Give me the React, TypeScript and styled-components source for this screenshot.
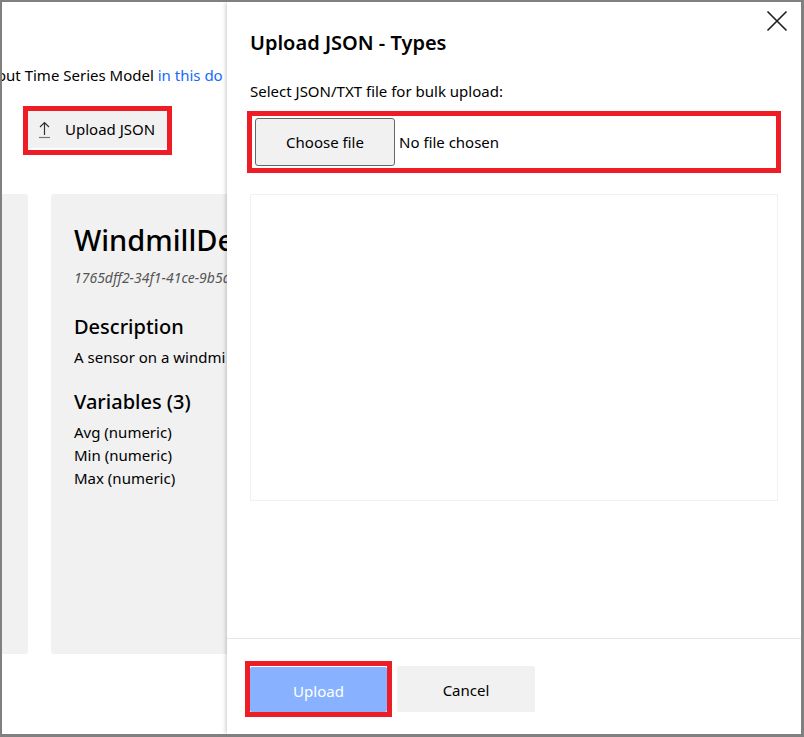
import React, { useState } from "react";
import styled, { createGlobalStyle, css } from "styled-components";

const GlobalStyle = createGlobalStyle`
  *, *::before, *::after { box-sizing: border-box; }
  body {
    margin: 0;
    background: #fff;
    color: #000;
    font: 400 15px/23px "Segoe UI", "Noto Sans", "Open Sans", sans-serif;
  }
  h1, h2, h3, p, ul { margin: 0; padding: 0; }
  button { font: inherit; color: inherit; cursor: pointer; }
`;

const Frame = styled.div`
  display: grid;
  grid-template-columns: 225px minmax(0, 1fr);
  min-height: 100vh;
  border: solid #808080;
  border-width: 2px 3px 3px 2px;
`;

const Page = styled.main`
  min-width: 0;
  overflow: hidden;
  padding-top: 62px;
  white-space: nowrap;
`;

const Intro = styled.p`
  margin-left: -5px;
`;

const DocLink = styled.a`
  color: #136bfb;
  text-decoration: none;
`;

const highlight = css`
  border: 5px solid #ee1c25;
`;

const Toolbar = styled.div`
  display: flex;
  margin: 19px 0 39px 21px;
`;

const ToolbarHighlight = styled.div`
  ${highlight}
  padding-bottom: 2px;
`;

const ToolbarButton = styled.button`
  display: flex;
  align-items: center;
  gap: 14px;
  height: 37px;
  padding: 0 12px 0 10px;
  border: 0;
  background: #f1f1f1;
`;

const Cards = styled.div`
  display: grid;
  grid-template-columns: 26px 320px;
  gap: 23px;
`;

const Card = styled.article<{ $cut?: boolean }>`
  min-height: 460px;
  padding: ${(p) => (p.$cut ? "0" : "29px 23px")};
  border-radius: ${(p) => (p.$cut ? "0 3px 3px 0" : "3px")};
  background: #f1f1f1;
`;

const CardTitle = styled.h1`
  font-size: 29px;
  line-height: 34px;
  font-weight: 500;
`;

const CardId = styled.p`
  margin: 9px 0 25px;
  color: #555;
  font-size: 14px;
  font-style: italic;
`;

const SectionTitle = styled.h2`
  margin-bottom: 6px;
  font-size: 20px;
  line-height: 26px;
  font-weight: 500;
`;

const Description = styled.p`
  margin-bottom: 20px;
`;

const VariableList = styled.ul`
  list-style: none;
`;

const Panel = styled.section`
  z-index: 1;
  display: flex;
  flex-direction: column;
  min-width: 0;
  background: #fff;
  box-shadow: 0 0 5px rgba(0, 0, 0, 0.3);
  clip-path: inset(0 0 0 -8px);
`;

const PanelHeader = styled.header`
  display: flex;
  justify-content: space-between;
  align-items: flex-start;
  padding: 8px 13px 0 23px;
`;

const PanelTitle = styled.h2`
  padding-top: 20px;
  font-size: 20px;
  line-height: 26px;
  font-weight: 600;
`;

const CloseButton = styled.button`
  display: flex;
  padding: 0;
  border: 0;
  background: none;
`;

const PanelBody = styled.div`
  flex: 1;
  padding: 24px 20px;
`;

const Prompt = styled.p`
  margin: 0 3px 8px;
`;

const FilePicker = styled.label`
  ${highlight}
  position: relative;
  display: flex;
  align-items: center;
  gap: 4px;
  height: 62px;
  padding: 0 3px;
  cursor: pointer;
`;

const FileInput = styled.input`
  position: absolute;
  inset: 0;
  width: 100%;
  opacity: 0;
  cursor: pointer;
`;

const FileButton = styled.span`
  display: grid;
  place-items: center;
  width: 140px;
  height: 48px;
  border: 1px solid #666;
  border-radius: 3px;
  background: #f1f1f1;
`;

const Preview = styled.div`
  height: 307px;
  margin: 21px 3px 0;
  border: 1px solid #f1f1f1;
`;

const PanelFooter = styled.footer`
  display: flex;
  align-items: center;
  gap: 5px;
  height: 96px;
  padding: 4px 18px 0;
  border-top: 1px solid #e6e6e6;
`;

const UploadHighlight = styled.div`
  ${highlight}
  padding-top: 1px;
`;

const ActionButton = styled.button<{ $primary?: boolean }>`
  display: block;
  width: ${(p) => (p.$primary ? 137 : 138)}px;
  height: ${(p) => (p.$primary ? 45 : 46)}px;
  padding: 4px 0 0;
  border: 0;
  border-radius: 2px;
  background: ${(p) => (p.$primary ? "#88b2ff" : "#f1f1f1")};
  color: ${(p) => (p.$primary ? "#fff" : "#000")};
`;

const UploadIcon = () => (
  <svg width="13" height="18" viewBox="0 0 13 18" fill="none" aria-hidden="true">
    <path d="M6.500 14V1.500M2 6l4.500-4.500L11 6" stroke="#333" strokeWidth="1.2" />
    <path d="M1 16.500h11" stroke="#777" strokeWidth="1.2" />
  </svg>
);

const CloseIcon = () => (
  <svg width="22" height="22" viewBox="0 0 22 22" fill="none" aria-hidden="true">
    <path d="M1.500 1.500l19 19M20.500 1.500l-19 19" stroke="#222" strokeWidth="1.7" />
  </svg>
);

const variables = ["Avg", "Min", "Max"];

export default function App() {
  const [fileName, setFileName] = useState("No file chosen");

  return (
    <>
      <GlobalStyle />
      <Frame>
        <Page>
          <Intro>
            out Time Series Model <DocLink href="#docs">in this do</DocLink>
          </Intro>
          <Toolbar>
            <ToolbarHighlight>
              <ToolbarButton type="button">
                <UploadIcon />
                Upload JSON
              </ToolbarButton>
            </ToolbarHighlight>
          </Toolbar>
          <Cards>
            <Card $cut />
            <Card>
              <CardTitle>WindmillDe</CardTitle>
              <CardId>1765dff2-34f1-41ce-9b5a</CardId>
              <SectionTitle>Description</SectionTitle>
              <Description>A sensor on a windmi</Description>
              <SectionTitle>Variables ({variables.length})</SectionTitle>
              <VariableList>
                {variables.map((name) => (
                  <li key={name}>{name} (numeric)</li>
                ))}
              </VariableList>
            </Card>
          </Cards>
        </Page>
        <Panel role="dialog" aria-labelledby="panel-title">
          <PanelHeader>
            <PanelTitle id="panel-title">Upload JSON - Types</PanelTitle>
            <CloseButton type="button" aria-label="Close">
              <CloseIcon />
            </CloseButton>
          </PanelHeader>
          <PanelBody>
            <Prompt id="file-prompt">Select JSON/TXT file for bulk upload:</Prompt>
            <FilePicker>
              <FileInput
                type="file"
                accept=".json,.txt"
                aria-describedby="file-prompt"
                onChange={(e) => setFileName(e.target.files?.[0]?.name ?? "No file chosen")}
              />
              <FileButton>Choose file</FileButton>
              <span>{fileName}</span>
            </FilePicker>
            <Preview />
          </PanelBody>
          <PanelFooter>
            <UploadHighlight>
              <ActionButton type="button" $primary>
                Upload
              </ActionButton>
            </UploadHighlight>
            <ActionButton type="button">Cancel</ActionButton>
          </PanelFooter>
        </Panel>
      </Frame>
    </>
  );
}
